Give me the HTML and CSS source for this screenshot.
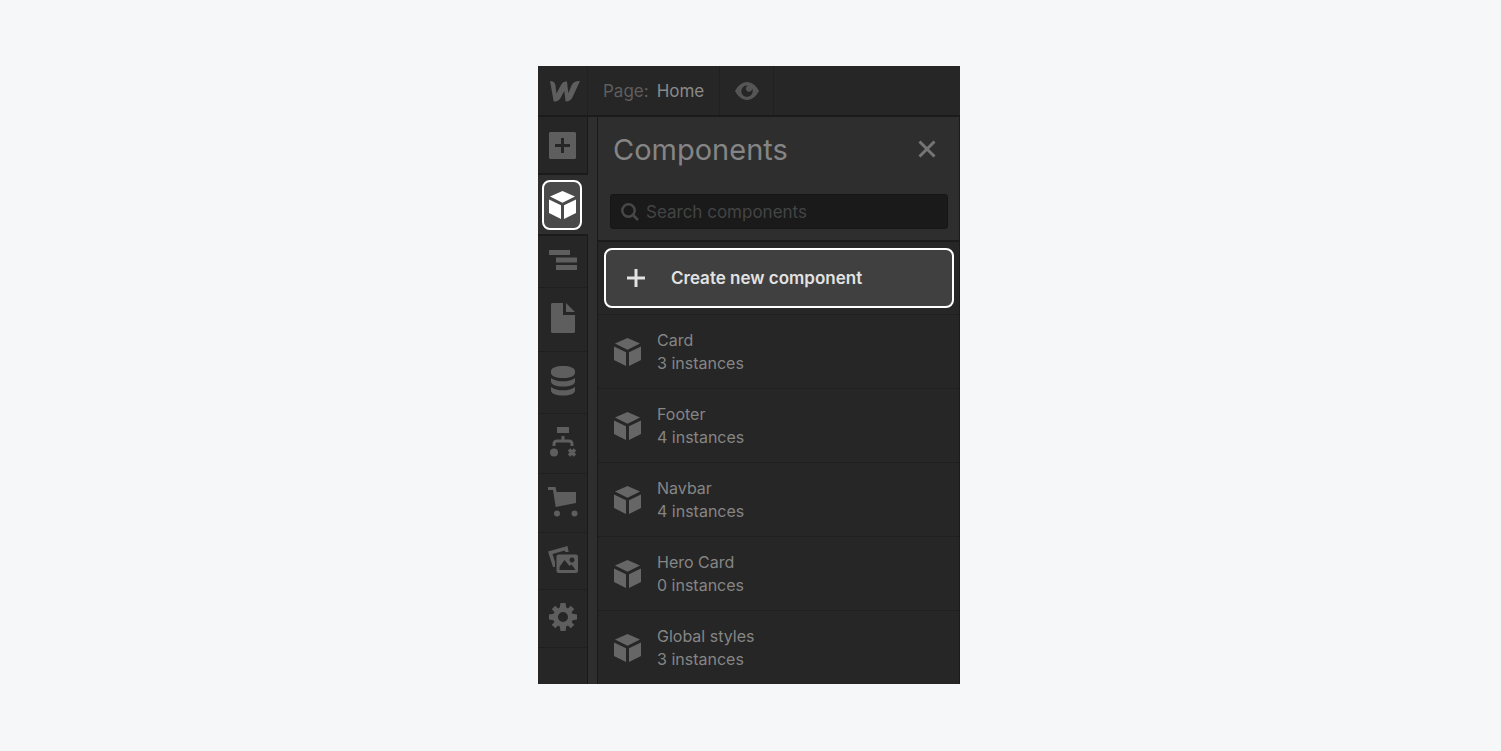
FILE: index.html
```html
<!DOCTYPE html>
<html lang="en">
<head>
	<meta charset="utf-8">
	<title>Components</title>
	<link rel="stylesheet" href="styles.css">
</head>
<body>
<svg class="defs" aria-hidden="true">
	<symbol id="cube" viewBox="0 0 27 28">
		<path d="M13.500 0 26 5.600 13.500 11.800 1 5.600z"/>
		<path d="M0 8.600 12 14.200V28L0 22z"/>
		<path d="M27 8.600 15 14.200V28l12-6z"/>
	</symbol>
</svg>
<div id="designer">
	<header class="topbar">
		<a class="logo" href="#" aria-label="Dashboard">
			<svg width="30" height="21" viewBox="0 0 30 21"><path d="M0 0c3 0 5 1.300 5.400 4.200l1 8.300 4.500-8.300C12.500 1.500 13.600.6 17 .6l1.300 11.700 3.600-8.500C23 1.300 25.500 0 30 0l-7.600 16.400C21 19.300 19 20.400 15.600 20.400L14.300 10l-3.800 7C9 19.700 7 20.600 3.700 20.600z"/></svg>
		</a>
		<div class="page-name"><span>Page:</span> <b>Home</b></div>
		<button class="preview" type="button" aria-label="Preview">
			<svg width="24" height="18" viewBox="0 0 24 18"><path fill-rule="evenodd" d="M0 9C3 3.500 7 0 12 0s9 3.500 12 9c-3 5.500-7 9-12 9S3 14.500 0 9zM11.500 3.500a5.700 5.700 0 1 0 6.200 5.500c0-1-.2-1.700-.6-2.500a3.100 3.100 0 1 1-4.300-2.800z"/></svg>
		</button>
	</header>
	<div class="main">
		<nav class="rail">
			<button class="add" type="button" aria-label="Add elements">
				<svg width="27" height="27" viewBox="0 0 27 27"><path fill-rule="evenodd" d="M1 0h25l1 1v25l-1 1H1l-1-1V1zM12 6v6H6v3h6v6h3v-6h6v-3h-6V6z"/></svg>
			</button>
			<div class="current">
				<button type="button" aria-label="Components">
					<svg width="27" height="28"><use href="#cube"/></svg>
				</button>
			</div>
			<button class="navigator" type="button" aria-label="Navigator">
				<svg width="28" height="20" viewBox="0 0 28 20"><path d="M0 0h21v5H0zM7 7.500h21v5H7zM7 15h21v5H7z"/></svg>
			</button>
			<button class="pages" type="button" aria-label="Pages">
				<svg width="24" height="30" viewBox="0 0 24 30"><path d="M1 0h11v12h12v17l-1 1H1l-1-1V1zM15 0l9 9h-9z"/></svg>
			</button>
			<button class="cms" type="button" aria-label="CMS">
				<svg width="24" height="30" viewBox="0 0 24 30"><path d="M0 5c0-3 5-5 12-5s12 2 12 5v2c0 3-5 5-12 5S0 10 0 7zM0 12c3 2.500 7 3.300 12 3.300S21 14.500 24 12v3.500c0 3-5 5-12 5s-12-2-12-5zM0 21c3 2.500 7 3.300 12 3.300S21 23.500 24 21v3.500c0 3-5 5-12 5s-12-2-12-5z"/></svg>
			</button>
			<button class="logic" type="button" aria-label="Logic">
				<svg width="26" height="30" viewBox="0 0 26 30"><path d="M7 0h12v6H7z"/><path d="M13 9v4M4 19v-2q0-3 3-3h12q3 0 3 3v2" fill="none" stroke="currentColor" stroke-width="3"/><circle cx="4" cy="25.500" r="4"/><path d="M19 22.500l6 6M25 22.500l-6 6" fill="none" stroke="currentColor" stroke-width="3.500"/></svg>
			</button>
			<button class="shop" type="button" aria-label="Ecommerce">
				<svg width="30" height="30" viewBox="0 0 30 30"><path d="M0 0h7.500l1.200 5H28v11L7.700 20 5 3H0z"/><circle cx="9" cy="26.500" r="3"/><circle cx="26.500" cy="26.500" r="3"/></svg>
			</button>
			<button class="assets" type="button" aria-label="Assets">
				<svg width="30" height="27" viewBox="0 0 30 27"><path d="M0 5.500 19.500 0l1.200 6h-3.500l-.3-1.500L4.500 8 7 16v5H5z"/><path fill-rule="evenodd" d="M10.500 8.500h17.500q2 0 2 2V25q0 2-2 2H10.500q-2 0-2-2V10.500q0-2 2-2zM11.500 24H27.500l-4-5.500-2 1.500-5-6-5 7zM24 11.500a2.500 2.500 0 1 0 .1 0z"/></svg>
			</button>
			<button class="settings" type="button" aria-label="Settings">
				<svg width="28" height="28" viewBox="0 0 28 28"><circle cx="14" cy="14" r="7.500" fill="none" stroke="currentColor" stroke-width="5"/><path d="M11.500 0h5l1 6h-7zM11.500 28h5l1-6h-7zM0 11.500v5l6 1v-7zM28 11.500v5l-6 1v-7z"/><path d="M4.500 4.500l4 4M19.500 19.500l4 4M4.500 23.500l4-4M19.500 8.500l4-4" stroke="currentColor" stroke-width="5"/></svg>
			</button>
		</nav>
		<section class="panel">
			<div class="panel-head">
				<div class="title">
					<h1>Components</h1>
					<button type="button" aria-label="Close">
						<svg width="18" height="18" viewBox="0 0 18 18"><path d="M1.500 1.500l15 15M16.500 1.500l-15 15" stroke="currentColor" stroke-width="3"/></svg>
					</button>
				</div>
				<label class="search">
					<svg width="18" height="18" viewBox="0 0 18 18"><g fill="none" stroke="currentColor" stroke-width="2.500"><circle cx="7.500" cy="7.500" r="6.200"/><path d="M12 12l5 5"/></g></svg>
					<input type="text" placeholder="Search components" aria-label="Search components">
				</label>
			</div>
			<div class="create">
				<button type="button">
					<svg width="18" height="18" viewBox="0 0 18 18"><path d="M9 0v18M0 9h18" stroke="currentColor" stroke-width="3"/></svg>
					Create new component
				</button>
			</div>
			<ul class="list">
				<li><svg width="27" height="28"><use href="#cube"/></svg><p>Card<br>3 instances</p></li>
				<li><svg width="27" height="28"><use href="#cube"/></svg><p>Footer<br>4 instances</p></li>
				<li><svg width="27" height="28"><use href="#cube"/></svg><p>Navbar<br>4 instances</p></li>
				<li><svg width="27" height="28"><use href="#cube"/></svg><p>Hero Card<br>0 instances</p></li>
				<li><svg width="27" height="28"><use href="#cube"/></svg><p>Global styles<br>3 instances</p></li>
			</ul>
		</section>
	</div>
</div>
</body>
</html>
```
FILE: styles.css
```css
* { box-sizing: border-box; }
body {
	margin: 0;
	padding: 66px 3px 66px 0;
	font-family: Inter, "Liberation Sans", sans-serif;
	font-size: 16px;
	color: #858585;
	background-color: #f5f7f9;
}
button {
	display: flex;
	align-items: center;
	justify-content: center;
	margin: 0;
	border: 0;
	padding: 0;
	font: inherit;
	color: inherit;
	background: none;
}
svg {
	display: block;
	flex: none;
	fill: currentColor;
}
.defs {
	position: absolute;
	width: 0;
	height: 0;
}
#designer {
	max-width: 422px;
	margin: 0 auto;
	background-color: #262626;
}

/* Top bar */
.topbar {
	display: flex;
	height: 51px;
	border-bottom: 2px solid #1b1b1b;
	color: #5e5e5e;
}
.logo {
	display: flex;
	align-items: center;
	justify-content: center;
	width: 50px;
	padding: 2px 0 0 4px;
	border-right: 1px solid #212121;
	color: #5e5e5e;
}
.page-name {
	display: flex;
	align-items: center;
	gap: 8px;
	padding: 1px 15px 0;
	border-right: 1px solid #202020;
	font-size: 17px;
}
.page-name b {
	font-weight: normal;
	color: #8a8a8a;
}
.preview {
	width: 54px;
	border-right: 1px solid #202020;
	color: #555;
}

/* Left rail */
.main { display: flex; }
.rail {
	width: 50px;
	border-right: 1px solid #191919;
	color: #5e5e5e;
}
.rail > button {
	width: 100%;
	padding-bottom: 3px;
	border-bottom: 1px solid #1f1f1f;
}
.rail > .add {
	height: 58px;
	padding-bottom: 0;
	border-bottom: 2px solid #1b1b1b;
}
.current {
	height: 61px;
	padding: 5px 4px;
	margin-right: -1px;
	border-bottom: 2px solid #1b1b1b;
	background-color: #2e2e2e;
}
.current button {
	width: 40px;
	height: 50px;
	border: 2px solid #fff;
	border-radius: 8px;
	color: #fff;
	background-color: #4a4a4a;
}
.navigator { height: 52px; }
.pages { height: 64px; }
.cms { height: 62px; }
.logic { height: 60px; }
.shop { height: 59px; }
.assets { height: 57px; }
.settings { height: 58px; }

/* Components panel */
.panel {
	flex: 1;
	border-left: 9px solid #2e2e2e;
	border-right: 1px solid #1b1b1b;
}
.panel-head {
	height: 125px;
	padding: 0 11px 0 12px;
	border-left: 1px solid #191919;
	border-bottom: 2px solid #1b1b1b;
	background-color: #2e2e2e;
}
.title {
	display: flex;
	align-items: center;
	justify-content: space-between;
	height: 64px;
	margin-bottom: 13px;
	padding: 0 12px 0 3px;
}
.title h1 {
	margin: 0;
	font-size: 29px;
	font-weight: normal;
}
.title button { color: #757575; }
.search {
	display: flex;
	align-items: center;
	gap: 7px;
	height: 35px;
	padding: 0 10px;
	border: 1px solid #161616;
	border-radius: 3px;
	color: #484848;
	background-color: #1a1a1a;
}
.search input {
	flex: 1;
	min-width: 0;
	border: 0;
	padding: 0;
	font: inherit;
	font-size: 17px;
	color: #858585;
	background: none;
}
.search input::placeholder { color: #444; }
.create {
	padding: 6px 5px 6px 6px;
	border-left: 1px solid #191919;
}
.create button {
	justify-content: flex-start;
	gap: 26px;
	width: 100%;
	height: 60px;
	padding-left: 21px;
	border: 2px solid #fff;
	border-radius: 8px;
	font-size: 17px;
	font-weight: 600;
	color: #e2e2e2;
	background-color: #404040;
}
.list {
	margin: 0;
	padding: 0;
	border-left: 1px solid #191919;
	list-style: none;
}
.list li {
	display: flex;
	align-items: center;
	gap: 16px;
	height: 74px;
	padding-left: 16px;
	border-top: 1px solid #1f1f1f;
	color: #666;
}
.list p {
	margin: 0;
	line-height: 23px;
	color: #858585;
}
```
